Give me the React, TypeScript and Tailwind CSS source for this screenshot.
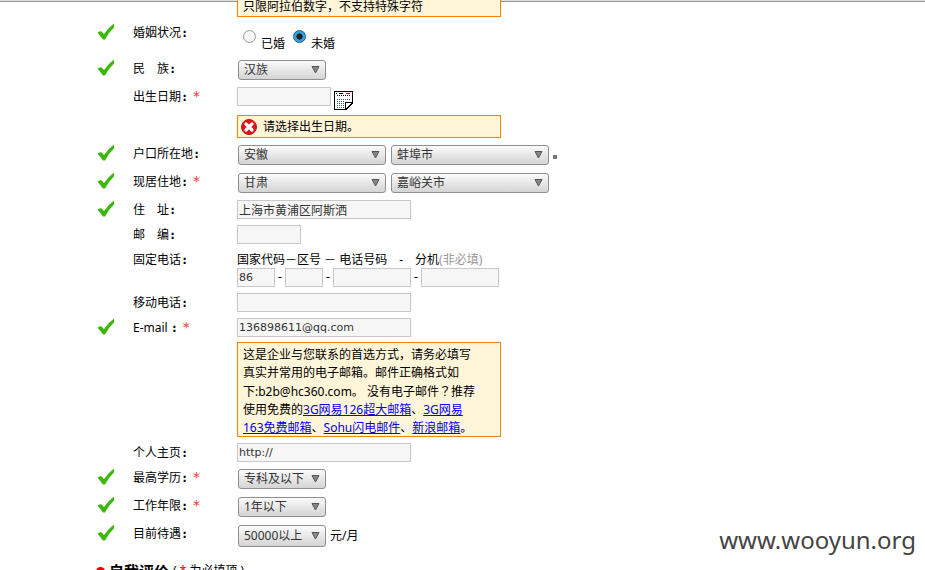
import React from 'react';

type FieldProps = {
  label: React.ReactNode;
  htmlFor?: string;
  checked?: boolean;
  required?: boolean;
  className?: string;
  children: React.ReactNode;
};

const CheckMark = () => (
  <svg width="19" height="18" viewBox="0 0 19 18" aria-hidden="true">
    <path d="M1.5 9.5 L5 8 L8 11 Q12.5 4.5 18 0.5 L18 4.5 Q13 9 9 16.5 H7 Z" fill="#3cb80c" />
  </svg>
);

const ErrorIcon = () => (
  <svg width="16" height="16" viewBox="0 0 16 16" aria-hidden="true">
    <circle cx="8" cy="8" r="7.5" fill="#e0141a" stroke="#b81c1c" />
    <path d="M5 5 L11 11 M11 5 L5 11" stroke="#fff" strokeWidth="3.2" strokeLinecap="round" />
  </svg>
);

const CalendarIcon = () => (
  <svg width="19" height="19" viewBox="0 0 19 19" shapeRendering="crispEdges" aria-hidden="true">
    <path d="M0.5 0.5 H18.5 V12 L12 18.5 H0.5 Z" fill="#fff" stroke="#000" />
    <path d="M11.5 18 V11.5 H18" fill="none" stroke="#000" />
    <path d="M2 2.5 H3 M5 2.5 H9" stroke="#000" />
    <path d="M12 2.5 H16" stroke="#c00030" />
    <path d="M3 4.5 H16" stroke="#000" strokeDasharray="1 1" />
    <path d="M3 8.5 H16 M3 10.5 H11 M3 12.5 H10 M3 14.5 H10 M3 16.5 H10" stroke="#3a6070" strokeDasharray="1 1" />
    <path d="M5 12.5 H6 M13 8.5 H14" stroke="#c00030" />
  </svg>
);

// One line of the form: tick, label, controls
const Field = ({ label, htmlFor, checked, required, className = '', children }: FieldProps) => (
  <div className={`flex items-start ${className}`}>
    <div className="w-[37px] shrink-0">{checked && <CheckMark />}</div>
    <div className="w-[104px] shrink-0 whitespace-pre pt-px">
      <label htmlFor={htmlFor}>
        {label}
        <span className="font-['DejaVu_Sans_Mono'] font-bold">:</span>
      </label>
      {required && <span className="ml-1 font-['DejaVu_Sans_Mono'] text-sm leading-none text-[#ff3333]">*</span>}
    </div>
    <div className="min-w-0">{children}</div>
  </div>
);

const TextBox = ({ className, ...props }: React.InputHTMLAttributes<HTMLInputElement>) => (
  <input
    type="text"
    className={`block h-[19px] border border-[#c8c8c8] bg-[#f6f6f6] px-px font-['DejaVu_Sans','Noto_Sans_CJK_SC',sans-serif] text-[#333] ${className}`}
    {...props}
  />
);

type SelectBoxProps = { id?: string; label?: string; value: string; className: string };

const SelectBox = ({ id, label, value, className }: SelectBoxProps) => (
  <div className={`relative ml-px mt-px ${className}`}>
    <select
      id={id}
      aria-label={label}
      className="block h-full w-full appearance-none rounded-[3px] border border-[#8f8f8f] bg-linear-to-b from-[#fbfbfb] to-[#d4d4d4] pl-[5px] text-[#333]"
    >
      <option>{value}</option>
    </select>
    <svg className="pointer-events-none absolute right-1.5 top-1/2 -mt-1" width="9" height="8" viewBox="0 0 9 8" aria-hidden="true">
      <path d="M1 0.5 H8 L4.5 7 Z" fill="#888" stroke="#555" />
    </svg>
  </div>
);

const Notice = ({ className = '', children }: { className?: string; children: React.ReactNode }) => (
  <div className={`w-[264px] border border-[#ff7f00] bg-[#fff5d8] px-[5px] leading-[18px] ${className}`}>{children}</div>
);

const MailLink = ({ children }: { children: React.ReactNode }) => (
  <a href="#" className="text-[#0000ee] underline">
    {children}
  </a>
);

const Radio = ({ label, defaultChecked }: { label: string; defaultChecked?: boolean }) => (
  <label className="flex items-start gap-[5px]">
    <input
      type="radio"
      name="marriage"
      defaultChecked={defaultChecked}
      className="mt-[7px] size-[13px] appearance-none rounded-full border border-[#999] bg-[#f8f8f8] checked:border-[#1f5f8f] checked:bg-radial checked:from-[#222] checked:from-35% checked:to-[#35a0e0] checked:to-45%"
    />
    <span className="mt-3">{label}</span>
  </label>
);

export default function App() {
  return (
    <div className="relative h-screen overflow-hidden bg-white font-['Noto_Sans','Noto_Sans_CJK_SC',sans-serif] text-xs leading-[18px] text-black">
      <div className="h-0.5 border-b border-[#999] bg-[#ddd]" />

      <form className="pl-24">
        <div className="ml-[141px] h-[15px]">
          <Notice className="-mt-1 border-t-0">只限阿拉伯数字，不支持特殊字符</Notice>
        </div>

        <Field label="婚姻状况" checked className="mt-2.5 h-9">
          <div className="ml-1.5 flex gap-2">
            <Radio label="已婚" />
            <Radio label="未婚" defaultChecked />
          </div>
        </Field>
        <Field label="民　族" htmlFor="nation" checked className="h-7">
          <SelectBox id="nation" value="汉族" className="h-5 w-[88px]" />
        </Field>
        <Field label="出生日期" htmlFor="birthday" required className="h-[57px]">
          <div className="flex gap-[3px]">
            <TextBox id="birthday" className="w-[94px] text-xs" />
            <button type="button" aria-label="选择日期" className="mt-1">
              <CalendarIcon />
            </button>
          </div>
          <Notice className="mt-[5px] flex h-[23px] items-center gap-1.5 !pl-[3px]">
            <ErrorIcon />
            <span>请选择出生日期。</span>
          </Notice>
        </Field>
        <Field label="户口所在地" htmlFor="origin" checked className="h-7">
          <div className="flex items-center gap-1">
            <SelectBox id="origin" value="安徽" className="h-5 w-[148px]" />
            <SelectBox label="户口所在城市" value="蚌埠市" className="h-5 w-[158px]" />
            <span className="mt-1 size-1 bg-[#777]" />
          </div>
        </Field>
        <Field label="现居住地" htmlFor="live" checked required className="h-7">
          <div className="flex gap-1">
            <SelectBox id="live" value="甘肃" className="h-5 w-[148px]" />
            <SelectBox label="现居住城市" value="嘉峪关市" className="h-5 w-[158px]" />
          </div>
        </Field>
        <Field label="住　址" htmlFor="address" checked className="h-[25px]">
          <TextBox id="address" defaultValue="上海市黄浦区阿斯洒" className="w-[174px] text-xs" />
        </Field>
        <Field label="邮　编" htmlFor="zip" className="h-[25px]">
          <TextBox id="zip" className="w-16 text-xs" />
        </Field>
        <Field label="固定电话" htmlFor="country" className="h-[43px]">
          <div className="h-[18px] whitespace-pre pt-px">
            国家代码－区号 － 电话号码　-　分机<span className="text-[#999]">(非必填)</span>
          </div>
          <div className="flex">
            <TextBox id="country" defaultValue="86" className="w-[38px] text-[11px]" />
            <span className="w-2.5 text-center">-</span>
            <TextBox aria-label="区号" className="w-[38px] text-[11px]" />
            <span className="w-2.5 text-center">-</span>
            <TextBox aria-label="电话号码" className="w-[78px] text-[11px]" />
            <span className="w-2.5 text-center">-</span>
            <TextBox aria-label="分机" className="w-[78px] text-[11px]" />
          </div>
        </Field>
        <Field label="移动电话" htmlFor="mobile" className="h-[25px]">
          <TextBox id="mobile" className="w-[174px] text-[11px]" />
        </Field>
        <Field label="E-mail " htmlFor="email" checked required className="h-[125px]">
          <TextBox id="email" defaultValue="136898611@qq.com" className="w-[174px] text-[11px]" />
          <Notice className="mt-[5px] h-[95px] pt-[3px]">
            这是企业与您联系的首选方式，请务必填写
            <br />
            真实并常用的电子邮箱。邮件正确格式如
            <br />
            下:b2b@hc360.com。 没有电子邮件<span className="font-['Noto_Sans_CJK_TC']">？</span>推荐
            <br />
            使用免费的<MailLink>3G网易126超大邮箱</MailLink>、<MailLink>3G网易</MailLink>
            <br />
            <MailLink>163免费邮箱</MailLink>、<MailLink>Sohu闪电邮件</MailLink>、<MailLink>新浪邮箱</MailLink>。
          </Notice>
        </Field>
        <Field label="个人主页" htmlFor="homepage" className="h-[25px]">
          <TextBox id="homepage" defaultValue="http://" className="w-[174px] text-[11px]" />
        </Field>
        <Field label="最高学历" htmlFor="degree" checked required className="h-7">
          <SelectBox id="degree" value="专科及以下" className="h-5 w-[88px]" />
        </Field>
        <Field label="工作年限" htmlFor="years" checked required className="h-7">
          <SelectBox id="years" value="1年以下" className="h-5 w-[88px]" />
        </Field>
        <Field label="目前待遇" htmlFor="salary" checked className="h-9">
          <div className="flex items-center gap-1">
            <SelectBox id="salary" value="50000以上" className="h-[22px] w-[88px]" />
            <span>元/月</span>
          </div>
        </Field>

        <div className="flex items-center gap-1 pt-0.5">
          <span className="size-[9px] rounded-full bg-[#f00000]" />
          <h2 className="text-[15px] font-bold">自我评价</h2>
          <span>
            ( <span className="text-[#f00000]">*</span> 为必填项 )
          </span>
        </div>
      </form>

      <div className="absolute bottom-3.5 right-[9px] text-2xl text-[#444]">www.wooyun.org</div>
    </div>
  );
}
